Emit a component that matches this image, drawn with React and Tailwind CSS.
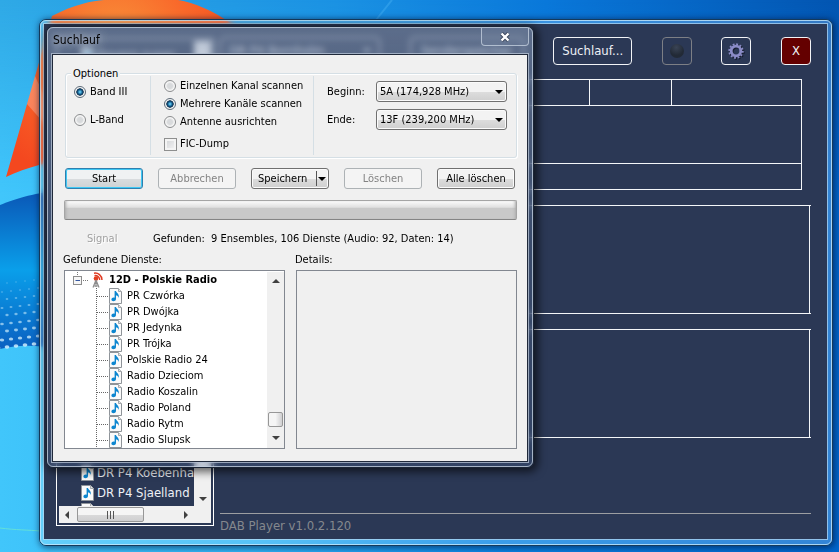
import React from "react";

const services = [
  "PR Czwórka",
  "PR Dwójka",
  "PR Jedynka",
  "PR Trójka",
  "Polskie Radio 24",
  "Radio Dzieciom",
  "Radio Koszalin",
  "Radio Poland",
  "Radio Rytm",
  "Radio Slupsk",
];

const dots = [];
for (let r = 0; r < 9; r++) {
  for (let c = 0; c < 5; c++) {
    dots.push({ x: -2 + c * 9 + (r % 2) * 4, y: 284 + r * 8 - c, s: 1 + r * 0.17, o: 0.25 + r * 0.07 });
  }
}

function Wallpaper() {
  return (
    <svg
      className="absolute inset-0 h-full w-full"
      viewBox="0 0 839 552"
      preserveAspectRatio="none"
      aria-hidden="true"
    >
      <defs>
        <linearGradient id="sky" x1="0" y1="0" x2="1" y2="0">
          <stop offset="0" stopColor="#2fa9e6" />
          <stop offset="0.4" stopColor="#1b92e3" />
          <stop offset="0.65" stopColor="#0a78da" />
          <stop offset="1" stopColor="#0355b1" />
        </linearGradient>
        <linearGradient id="low" x1="0" y1="0" x2="1" y2="0">
          <stop offset="0" stopColor="#41c6fb" />
          <stop offset="0.3" stopColor="#2fb4f5" />
          <stop offset="0.6" stopColor="#0a84e4" />
          <stop offset="1" stopColor="#0066cc" />
        </linearGradient>
        <linearGradient id="fade" x1="0" y1="0" x2="0" y2="1">
          <stop offset="0" stopColor="#fff" stopOpacity="0" />
          <stop offset="0.35" stopColor="#fff" stopOpacity="1" />
        </linearGradient>
        <mask id="lower">
          <rect width="839" height="552" fill="url(#fade)" />
        </mask>
        <radialGradient id="orange" cx="115" cy="40" r="150" gradientUnits="userSpaceOnUse">
          <stop offset="0" stopColor="#f8923a" />
          <stop offset="0.5" stopColor="#f9682a" />
          <stop offset="1" stopColor="#f4481f" />
        </radialGradient>
        <linearGradient id="flag" x1="0" y1="0" x2="0" y2="1">
          <stop offset="0" stopColor="#0a55b5" />
          <stop offset="0.5" stopColor="#0a9fea" />
          <stop offset="1" stopColor="#0a5fc0" />
        </linearGradient>
      </defs>
      <rect width="839" height="552" fill="url(#sky)" />
      <rect width="839" height="552" fill="url(#low)" mask="url(#lower)" />
      <path d="M52 16 C75 4 92 1 104 0 H178 C195 3 212 10 232 24 V120 L39 165 C28 168 16 172 6 177 L38 66 Z" fill="url(#orange)" />
      <path d="M35 76 L60 130 H50 L27 104 Z" fill="#fff" opacity="0.25" />
      <path d="M0 205 C15 199 30 194 60 190 V350 C38 344 15 345 0 349 Z" fill="url(#flag)" />
      {dots.map((d, i) => (
        <ellipse key={i} cx={d.x} cy={d.y} rx={d.s} ry={d.s * 0.7} fill="#d8f4ff" opacity={d.o} />
      ))}
      <path d="M0 528 C15 530 30 530 40 531" stroke="#63e0d8" fill="none" />
      <path d="M392 0 L376 20" stroke="#3aa7ee" strokeWidth="2" opacity="0.6" />
    </svg>
  );
}

function NoteIcon() {
  return (
    <svg className="h-4 w-[13px] shrink-0" viewBox="0 0 13 16" aria-hidden="true">
      <path d="M0.5 0.5 H9.5 L12.5 3.5 V15.5 H0.5 Z" fill="#fafafa" stroke="#8f9499" />
      <path d="M9.5 0.5 V3.5 H12.5" fill="#e4e4e4" stroke="#a5a9ad" />
      <path d="M5.6 3 H7 C7.2 5 10.8 5.6 9.6 10 C9.2 7.8 8.2 7.4 7 7.4 V11 C7 13.6 2.4 14 2.4 11.6 C2.4 9.8 4.4 9.2 5.6 9.8 Z" fill="#0c86d0" />
    </svg>
  );
}

function AntennaIcon() {
  return (
    <svg className="h-4 w-[13px] shrink-0" viewBox="0 0 13 16" aria-hidden="true">
      <path d="M3 1.2 C7 0.4 11 3.6 11 8 M3.5 3.6 C6.4 3.2 8.6 5 8.7 8" fill="none" stroke="#e03a22" strokeWidth="1.4" />
      <circle cx="5" cy="6.6" r="2.3" fill="#e23d20" />
      <path d="M5 8 L2 15.5 M5 8 L8 15.5 M3.4 11.5 H6.6 M2.5 14 H7.5 M5 8 V15" fill="none" stroke="#8d8d8d" strokeWidth="1.2" />
    </svg>
  );
}

function Arrow({ dir = "down", className = "" }) {
  const paths = { down: "M0 1 H8 L4 5 Z", up: "M0 5 H8 L4 1 Z", left: "M6 -1 V7 L2 3 Z", right: "M2 -1 V7 L6 3 Z" };
  return (
    <svg className={`h-[6px] w-2 shrink-0 overflow-visible ${className}`} viewBox="0 0 8 6" aria-hidden="true">
      <path d={paths[dir]} fill="currentColor" />
    </svg>
  );
}

function Radio({ name, label, checked }) {
  return (
    <label className="flex h-[18px] items-center gap-1">
      <input
        type="radio"
        name={name}
        defaultChecked={checked}
        className="h-3 w-3 shrink-0 appearance-none rounded-full border border-[#8a8c8e] bg-[radial-gradient(circle,#d8dadc_0_35%,#f6f6f6_60%)] checked:border-[#5d6b78] checked:bg-[radial-gradient(circle_at_50%_50%,#5cc4ee_0_8%,#0d4f7e_35%,#12304a_48%,#f2f4f5_56%)]"
      />
      <span>{label}</span>
    </label>
  );
}

const buttonBase = "h-[21px] w-[78px] rounded-[3px] border";
const buttonFace = "border-[#707070] bg-linear-to-b from-[#f3f3f3] from-50% via-[#dddddd] via-51% to-[#cfcfcf] shadow-[inset_0_0_0_1px_#fbfbfb]";

function DialogButton({ children, disabled, primary }) {
  const look = disabled
    ? "border-[#adb2b5] bg-[#f4f4f4] text-[#838383]"
    : primary
      ? "border-[#2f7fae] bg-linear-to-b from-[#f0f2f3] from-50% via-[#dadddf] via-51% to-[#cfd2d4] shadow-[inset_0_0_0_1px_#3fc8f4]"
      : buttonFace;
  return (
    <button type="button" disabled={disabled} className={`${buttonBase} ${look}`}>
      {children}
    </button>
  );
}

function ChannelSelect({ id, label, value }) {
  return (
    <div className="flex h-[21px] items-center">
      <label htmlFor={id} className="w-[49px]">
        {label}
      </label>
      <div className="relative flex-1">
        <select id={id} className={`h-[21px] w-full appearance-none rounded-[3px] border pl-[3px] ${buttonFace}`}>
          <option>{value}</option>
        </select>
        <Arrow className="pointer-events-none absolute top-2 right-1 text-black" />
      </div>
    </div>
  );
}

function ServiceTree() {
  return (
    <div className="flex h-[179px] w-[221px] border border-[#828790] bg-white pt-px">
      <ul className="min-w-0 flex-1 overflow-hidden">
        <li className="flex h-4 items-center pl-2 font-bold">
          <svg className="h-4 w-[18px] shrink-0" viewBox="0 0 18 16" aria-hidden="true">
            <path d="M4.5 0 V4" stroke="#777" strokeDasharray="1 1" />
            <path d="M10 8.5 H16" stroke="#777" strokeDasharray="1 1" />
            <rect x="0.5" y="4.5" width="8" height="8" fill="#f6f6f6" stroke="#8d8d8d" />
            <path d="M2.5 8.5 H7" stroke="#3557a0" />
          </svg>
          <AntennaIcon />
          <span className="pl-[5px] leading-4 whitespace-nowrap">12D - Polskie Radio</span>
        </li>
        {services.map((name) => (
          <li key={name} className="flex h-4 items-center pl-[31px]">
            <svg className="h-4 w-[13px] shrink-0" viewBox="0 0 13 16" aria-hidden="true">
              <path d="M0.5 0 V16 M1 8.5 H12" stroke="#666" strokeDasharray="1 1" />
            </svg>
            <NoteIcon />
            <span className="pl-[5px] leading-4 whitespace-nowrap">{name}</span>
          </li>
        ))}
      </ul>
      <div className="flex w-[17px] flex-col items-center bg-[#f0f0f0] pt-[6px] pb-[7px] text-[#404040]" aria-hidden="true">
        <Arrow dir="up" />
        <div className="mt-auto mb-2 h-[15px] w-[15px] rounded-[2px] border border-[#979797] bg-linear-to-r from-[#f5f5f5] from-50% to-[#cfcfd1]" />
        <Arrow />
      </div>
    </div>
  );
}

function ScanDialog() {
  return (
    <section
      aria-label="Suchlauf"
      className="absolute top-[26px] left-[46px] w-[488px] rounded-[7px] border border-[#1a2435] bg-linear-to-b from-[#8ea2c0]/50 via-[#5f7aa0]/30 to-[#46608a]/30 text-[11px] leading-[14px] text-black shadow-[2px_2px_8px_2px_rgba(0,0,0,0.6)] backdrop-blur-[3px]"
    >
      <div className="rounded-[6px] border border-[#c3cfdf]/80 px-[3px] pb-[3px]">
        <header className="flex h-[25px] items-start justify-between pl-[2px]">
          <h1 className="pt-1 text-[12px] leading-4 [text-shadow:0_0_8px_rgba(255,255,255,0.7),0_0_14px_rgba(255,255,255,0.5)]">
            Suchlauf
          </h1>
          <button
            type="button"
            aria-label="Schließen"
            className="flex h-[18px] w-12 items-center justify-center rounded-b-[4px] border border-t-0 border-[#c3cfdf]/80 bg-[#7585a0]/30"
          >
            <svg className="h-[10px] w-3" viewBox="0 0 12 10" aria-hidden="true">
              <path d="M2.5 1.5 L9.5 8.5 M9.5 1.5 L2.5 8.5" stroke="#3b465a" strokeWidth="4" />
              <path d="M2.5 1.5 L9.5 8.5 M9.5 1.5 L2.5 8.5" stroke="#fff" strokeWidth="2.4" />
            </svg>
          </button>
        </header>
        <div className="border border-[#b4c1d2]/80">
          <div className="border border-[#20293a] bg-[#f0f0f0] pr-[10px] pb-3 pl-[11px]">
            <fieldset className="relative mt-[18px] ml-px flex h-[85px] rounded-[3px] border border-[#d5dfe5] shadow-[1px_1px_0_#fff,inset_1px_1px_0_#fff]">
              <legend className="absolute -top-[7px] left-[5px] bg-[#f0f0f0] px-[2px]">Optionen</legend>
              <div className="my-[2px] flex w-[85px] flex-col gap-[10px] border-r border-[#d5dfe5] pt-[7px] pl-2">
                <Radio name="band" label="Band III" checked />
                <Radio name="band" label="L-Band" />
              </div>
              <div className="my-[2px] flex w-[163px] flex-col border-r border-[#d5dfe5] pt-px pl-[13px]">
                <Radio name="mode" label="Einzelnen Kanal scannen" />
                <Radio name="mode" label="Mehrere Kanäle scannen" checked />
                <Radio name="mode" label="Antenne ausrichten" />
                <label className="mt-1 flex h-[18px] items-center gap-[3px]">
                  <input
                    type="checkbox"
                    className="h-[13px] w-[13px] appearance-none border border-[#8e8f8f] bg-linear-to-br from-[#d0d2d5] to-[#f6f6f6] shadow-[inset_0_0_0_2px_#f4f4f4]"
                  />
                  FIC-Dump
                </label>
              </div>
              <div className="flex flex-1 flex-col gap-[7px] pt-[7px] pr-[9px] pl-[13px]">
                <ChannelSelect id="from" label="Beginn:" value="5A (174,928 MHz)" />
                <ChannelSelect id="to" label="Ende:" value="13F (239,200 MHz)" />
              </div>
            </fieldset>
            <div className="mt-[10px] flex gap-[15px] pl-px">
              <DialogButton primary>Start</DialogButton>
              <DialogButton disabled>Abbrechen</DialogButton>
              <button type="button" className={`${buttonBase} ${buttonFace} flex items-center pl-[6px]`}>
                <span className="flex-1 text-left">Speichern</span>
                <span className="h-[15px] w-px bg-[#555]" />
                <Arrow className="mr-[2px] ml-px" />
              </button>
              <DialogButton disabled>Löschen</DialogButton>
              <DialogButton>Alle löschen</DialogButton>
            </div>
            <div
              role="progressbar"
              aria-label="Suchlauf"
              className="mt-[11px] h-5 rounded-[2px] border border-[#a5a5a5] border-b-[#858585] bg-linear-to-b from-[#f8f8f8] from-5% via-[#e0e0e0] via-35% to-[#c9c9c9] to-40% shadow-[inset_3px_0_3px_-2px_#aaa,inset_-3px_0_3px_-2px_#aaa]"
            />
            <div className="mt-3 flex">
              <span className="w-[89px] pl-[23px] text-[#a0a0a0] [text-shadow:1px_1px_0_#fff]">Signal</span>
              <span className="whitespace-pre">{"Gefunden:  9 Ensembles, 106 Dienste (Audio: 92, Daten: 14)"}</span>
            </div>
            <div className="mt-[7px] flex gap-[11px]">
              <div>
                <h2 className="-ml-px mb-[3px]">Gefundene Dienste:</h2>
                <ServiceTree />
              </div>
              <div className="flex flex-1 flex-col">
                <h2 className="-ml-px mb-[3px]">Details:</h2>
                <div className="flex-1 border border-[#828790]" />
              </div>
            </div>
          </div>
        </div>
      </div>
    </section>
  );
}

function StationList() {
  return (
    <div className="mt-px mb-[13px] flex w-[158px] shrink-0 flex-col border border-white p-[2px]">
      <div className="flex min-h-0 flex-1">
        <ul className="flex min-w-0 flex-1 flex-col overflow-hidden pt-1 pl-[22px]">
          <li className="flex h-5 items-center gap-[3px] whitespace-nowrap">
            <NoteIcon />
            Bayern super
          </li>
          <li className="mt-auto flex h-5 shrink-0 items-center gap-[3px] whitespace-nowrap">
            <NoteIcon />
            DR P4 Koebenhavn
          </li>
          <li className="flex h-5 shrink-0 items-center gap-[3px] whitespace-nowrap">
            <NoteIcon />
            DR P4 Sjaelland
          </li>
          <li className="flex h-[3px] shrink-0 items-start overflow-hidden">
            <NoteIcon />
          </li>
        </ul>
        <div className="flex w-[17px] flex-col items-center justify-end bg-[#f0f0f0] pb-1 text-[#404040]" aria-hidden="true">
          <Arrow />
        </div>
      </div>
      <div className="flex h-[17px] items-center bg-[#f0f0f0] pr-[21px] pl-1 text-[#404040]" aria-hidden="true">
        <Arrow dir="left" />
        <div className="ml-[6px] flex h-[15px] w-[67px] items-center justify-center gap-[2px] rounded-[2px] border border-[#979797] bg-linear-to-b from-[#f5f5f5] from-50% via-[#dadada] via-51% to-[#cfcfd1]">
          <span className="h-2 w-px bg-[#555]" />
          <span className="h-2 w-px bg-[#555]" />
          <span className="h-2 w-px bg-[#555]" />
        </div>
        <Arrow dir="right" className="ml-auto" />
      </div>
    </div>
  );
}

function PlayerWindow() {
  const box = "h-7 rounded-[4px] border border-[#f2f4f7]";
  const icon = "w-[30px] shrink-0 flex items-center justify-center";
  return (
    <main className="absolute top-[19px] right-[6px] bottom-[6px] left-[39px] flex rounded-[7px] border border-[#153a5c] bg-white/20 text-[13px] leading-4 text-[#eef1f6] shadow-[1px_1px_6px_1px_rgba(0,20,60,0.6)] backdrop-blur-[3px]">
      <div className="flex flex-1 rounded-[6px] border border-[#c5e8fb]/80 p-[2px] pr-[3px] pb-1">
        <div className="flex flex-1 gap-[6px] border border-[#b9dcf2]/70 bg-[#2b3855] bg-clip-padding pt-[13px] pr-4 pl-3">
          <StationList />
          <div className="flex min-w-0 flex-1 flex-col">
            <div className="flex justify-between">
              <button type="button" className={`${box} flex w-[160px] items-center justify-between px-2`}>
                DR P4 Bornholm
                <Arrow />
              </button>
              <button type="button" className={`${box} w-[114px]`}>
                Senderspeicher
              </button>
              <button type="button" className={`${box} w-[79px]`}>
                Suchlauf...
              </button>
              <button type="button" aria-label="Aufnahme" disabled className={`h-7 rounded-[4px] border border-[#7d7f85] ${icon}`}>
                <span className="h-[14px] w-[14px] rounded-full bg-[radial-gradient(circle_at_45%_25%,#3a4456,#222a36_60%)]" />
              </button>
              <button type="button" aria-label="Einstellungen" className={`${box} ${icon}`}>
                <svg className="h-4 w-4 drop-shadow-[1px_1px_0_#151c2e]" viewBox="0 0 16 16" aria-hidden="true">
                  <circle cx="8" cy="8" r="6.8" fill="none" stroke="#8b8cc7" strokeWidth="1.8" strokeDasharray="1.9 1.66" />
                  <circle cx="8" cy="8" r="4.8" fill="none" stroke="#8b8cc7" strokeWidth="2.8" />
                </svg>
              </button>
              <button type="button" aria-label="Beenden" className={`${box} ${icon} bg-[#640000]`}>
                X
              </button>
            </div>
            <div className="mt-[14px] mr-[9px] border border-[#f4f6f9]">
              <div className="flex h-[26px] justify-end border-b border-[#f4f6f9]">
                <div className="w-[82px] border-l border-[#f4f6f9]" />
                <div className="w-[130px] border-l border-[#f4f6f9]" />
              </div>
              <div className="h-[58px] border-b border-[#f4f6f9]" />
              <div className="h-[25px]" />
            </div>
            <div className="mt-[15px] h-[109px] border-y border-[#f4f6f9] pr-px">
              <div className="h-full border-x border-[#f4f6f9]" />
            </div>
            <div className="mt-[15px] h-[109px] border-y border-[#f4f6f9] pr-px">
              <div className="h-full border-x border-[#f4f6f9]" />
            </div>
            <footer className="mt-auto border-t border-[#9c9ea2] pt-1 pb-[5px] text-[#85888e]">DAB Player v1.0.2.120</footer>
          </div>
        </div>
      </div>
    </main>
  );
}

export default function App() {
  return (
    <div className="relative h-screen min-h-[552px] overflow-hidden font-['DejaVu_Sans_Condensed','DejaVu_Sans',sans-serif]">
      <Wallpaper />
      <PlayerWindow />
      <ScanDialog />
    </div>
  );
}
